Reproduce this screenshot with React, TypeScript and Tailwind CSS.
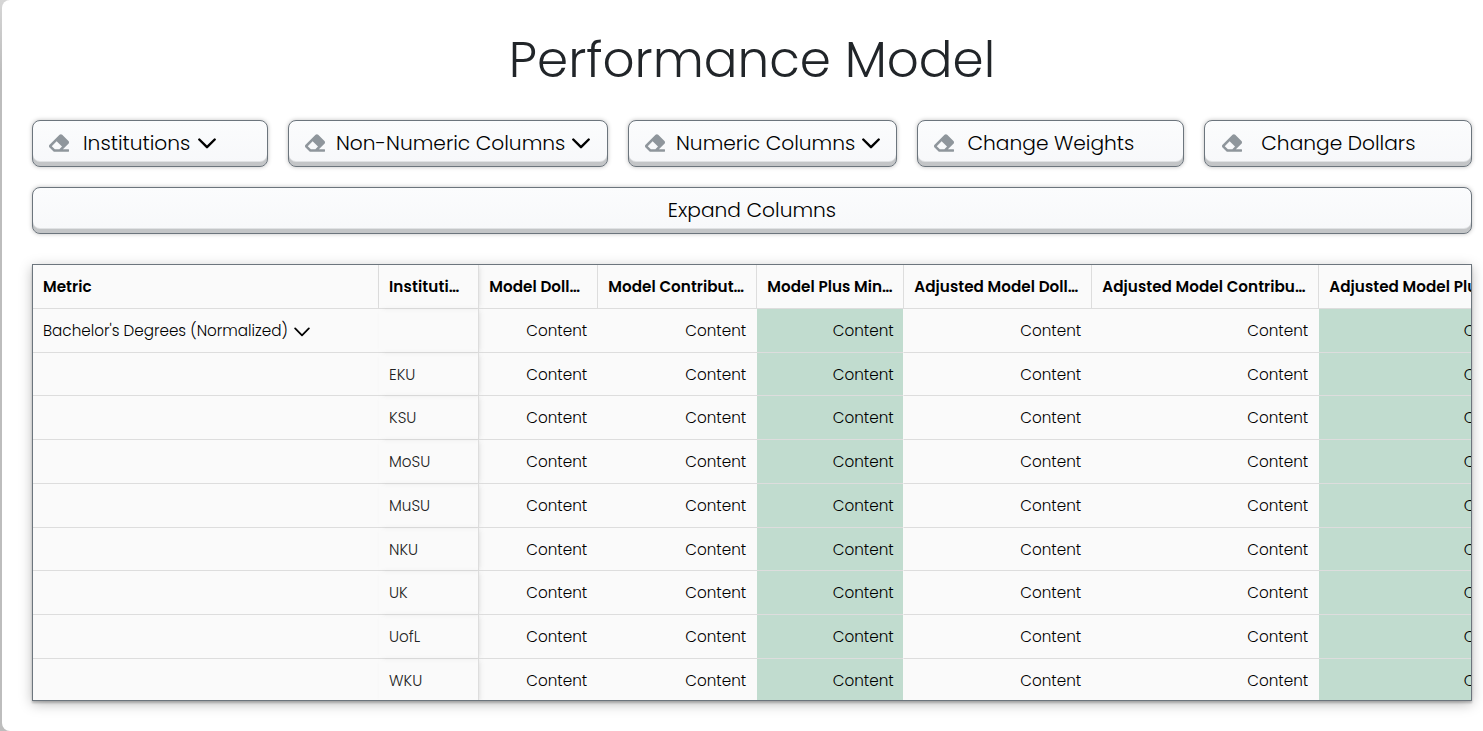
import { FaEraser } from "react-icons/fa";

const buttons = [
  { label: "Institutions", chevron: true, box: "w-[236px] pl-[16px]", text: "ml-[14px] mr-[0.8px]" },
  { label: "Non-Numeric Columns", chevron: true, box: "w-[320px] pl-[16px]", text: "ml-[11px] mr-[0.5px]" },
  { label: "Numeric Columns", chevron: true, box: "w-[269px] pl-[16px]", text: "ml-[11px]" },
  { label: "Change Weights", chevron: false, box: "w-[267px] pl-[16px]", text: "ml-[13.5px]" },
  { label: "Change Dollars", chevron: false, box: "w-[268px] pl-[17px]", text: "ml-[19.3px]" },
];

const columns = [
  { label: "Model Doll…" },
  { label: "Model Contribut…" },
  { label: "Model Plus Min…", green: true },
  { label: "Adjusted Model Doll…" },
  { label: "Adjusted Model Contribu…" },
  { label: "Adjusted Model Plus Min…", green: true },
];

const institutions = ["", "EKU", "KSU", "MoSU", "MuSU", "NKU", "UK", "UofL", "WKU"];

const keycap =
  "flex h-[47px] shrink-0 items-center rounded-[8px] border border-[#6c757d] bg-[#f8f9fb] bg-linear-to-b from-[#fbfcfd] to-[#f7f8fa] pb-[2px] text-[20.2px] leading-none font-light text-black shadow-[inset_0_-4px_0_#c3c5c7,inset_0_-5px_0_#e0e2e4,0_0_4px_rgba(0,0,0,0.25)]";

const grid = "grid h-[43.75px] w-[1502px] grid-cols-[346px_100px_119px_159px_147px_188px_227px_216px]";

function Chevron({ className, weight }: { className: string; weight: number }) {
  return (
    <svg viewBox="0 0 18 11" className={className} fill="none" stroke="currentColor" strokeWidth={weight} strokeLinecap="round" strokeLinejoin="round">
      <path d="M1.3 1.5 9 9.2l7.7-7.7" />
    </svg>
  );
}

export default function App() {
  return (
    <div className="h-[731px] overflow-hidden bg-linear-to-b from-[#d6d6d6] via-[#bdbdbd] via-10% to-[#bdbdbd] pl-[2px] font-['Poppins','Inter',sans-serif]">
      <main className="flex h-full flex-col rounded-l-[8px] bg-white pr-[11px] pl-[30px]">
        <h1 className="mt-[30px] h-[60px] text-center text-[50px] leading-[60px] font-light whitespace-nowrap text-[#212529]">
          Performance Model
        </h1>
        <div className="mt-[30px] flex gap-5">
          {buttons.map((b) => (
            <button key={b.label} className={`${keycap} ${b.box}`}>
              <FaEraser className="size-5 shrink-0 text-[#8f969c]" />
              <span className={`${b.text} pt-[1.5px] whitespace-nowrap`}>{b.label}</span>
              {b.chevron && <Chevron className="mt-px ml-[6.5px] h-[11px] w-[18px] shrink-0" weight={2.4} />}
            </button>
          ))}
        </div>
        <button className={`${keycap} mt-5 justify-center`}>
          <span className="pt-[1.5px]">Expand Columns</span>
        </button>
        <section className="mt-[30px] h-[437px] overflow-hidden border border-[#6c757d] bg-[#fafafa] text-[15.2px] font-light text-black shadow-[0_2px_2px_rgba(0,0,0,0.22),0_3px_12px_rgba(0,0,0,0.26)]">
          <div className={`${grid} font-semibold tracking-[0.04px]`}>
            <div className="flex items-center border-r border-b border-[#dddddd] pt-[2.5px] pl-[10px]"><span>Metric</span></div>
            <div className="flex items-center border-r border-b border-[#dddddd] pt-[2.5px] pl-[10px] tracking-[0.12px] shadow-[2px_0_5px_-2px_rgba(136,136,136,0.3)]"><span>Instituti…</span></div>
            {columns.map((c) => (
              <div key={c.label} className="flex items-center border-r border-b border-[#dddddd] pt-[2.5px] pl-[10.3px] whitespace-nowrap">
                <span>{c.label}</span>
              </div>
            ))}
          </div>
          {institutions.map((name, i) => (
            <div key={i} className={grid}>
              <div className="flex items-center border-b border-[#dddddd] pt-[2.25px] pl-[10px]">
                {i === 0 && (
                  <>
                    <span className="whitespace-nowrap">Bachelor's Degrees (Normalized)</span>
                    <Chevron className="mt-px ml-[6px] h-[10px] w-[16px]" weight={2} />
                  </>
                )}
              </div>
              <div className="flex items-center border-r border-b border-[#dddddd] pt-[2.25px] pl-[10px] text-[#222222] shadow-[2px_0_5px_-2px_rgba(136,136,136,0.3)]">
                <span>{name}</span>
              </div>
              {columns.map((c) => (
                <div key={c.label} className={`flex items-center justify-end pt-[2.25px] ${c.green ? "border-r border-r-[#fafafa] border-b border-b-[#dddddd] bg-[#c1dccf] pr-[9.3px]" : "border-b border-[#dddddd] pr-[10.8px]"}`}>
                  <span>Content</span>
                </div>
              ))}
            </div>
          ))}
        </section>
      </main>
    </div>
  );
}
